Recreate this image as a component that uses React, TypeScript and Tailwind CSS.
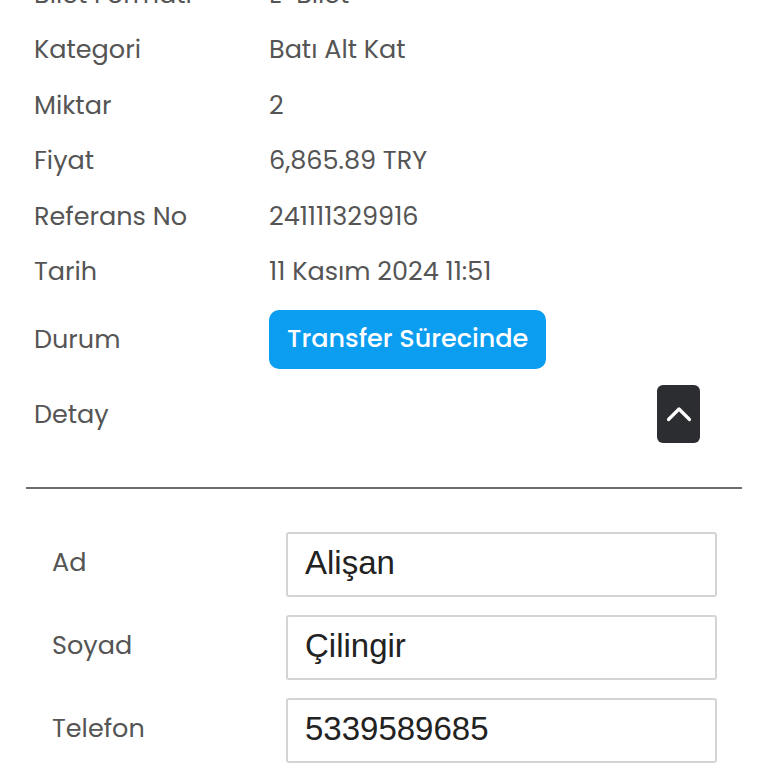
import React from "react";

const rows: [string, string][] = [
  ["Bilet Formatı", "E-Bilet"],
  ["Kategori", "Batı Alt Kat"],
  ["Miktar", "2"],
  ["Fiyat", "6,865.89 TRY"],
  ["Referans No", "241111329916"],
  ["Tarih", "11 Kasım 2024 11:51"],
];

const font = { fontFamily: "Poppins, 'Open Sans', sans-serif" };

export default function App() {
  return (
    <div className="w-[768px] h-[768px] overflow-hidden bg-white text-[#555555]" style={font}>
      <div className="px-[34px] mt-[-34px]">
        {rows.map(([k, v]) => (
          <div key={k} className="flex items-center h-[55.5px] text-[25.5px]">
            <div className="w-[235px] shrink-0">{k}</div>
            <div>{v}</div>
          </div>
        ))}
        <div className="flex items-center h-[80px] text-[25.5px]">
          <div className="w-[235px] shrink-0">Durum</div>
          <div className="h-[59px] px-[18px] flex items-center rounded-[10px] bg-[#0b9df0] text-white font-medium text-[25.5px] pb-[2px]">
            Transfer Sürecinde
          </div>
        </div>
        <div className="flex items-center h-[70px] text-[25.5px]">
          <div className="w-[235px] shrink-0">Detay</div>
          <div className="ml-auto mr-[34px] w-[43px] h-[58px] rounded-[6px] bg-[#2b2d30] flex items-center justify-center">
            <svg width="28" height="18" viewBox="0 0 28 18" fill="none">
              <path d="M3.5 14.5 L14 4 L24.5 14.5" stroke="white" strokeWidth="3.2" strokeLinecap="round" strokeLinejoin="round" />
            </svg>
          </div>
        </div>
      </div>
      <div className="mx-[26px] mt-[38px] h-[2px] bg-[#6e6e6e]" />
      <div className="pl-[52px] pr-[51px] pt-[43px] flex flex-col gap-[18px]">
        {[
          ["Ad", "Alişan"],
          ["Soyad", "Çilingir"],
          ["Telefon", "5339589685"],
        ].map(([k, v]) => (
          <div key={k} className="flex items-center h-[65px]">
            <div className="w-[234px] shrink-0 text-[25.5px] pb-[4px]">{k}</div>
            <div
              className="flex-1 h-[65px] border-2 border-[#d4d4d4] rounded-[3px] flex items-center pl-[17px] pb-[4px] text-[33px] text-[#222222]"
              style={{ fontFamily: "'Liberation Sans', Arial, sans-serif" }}
            >
              {v}
            </div>
          </div>
        ))}
      </div>
    </div>
  );
}
